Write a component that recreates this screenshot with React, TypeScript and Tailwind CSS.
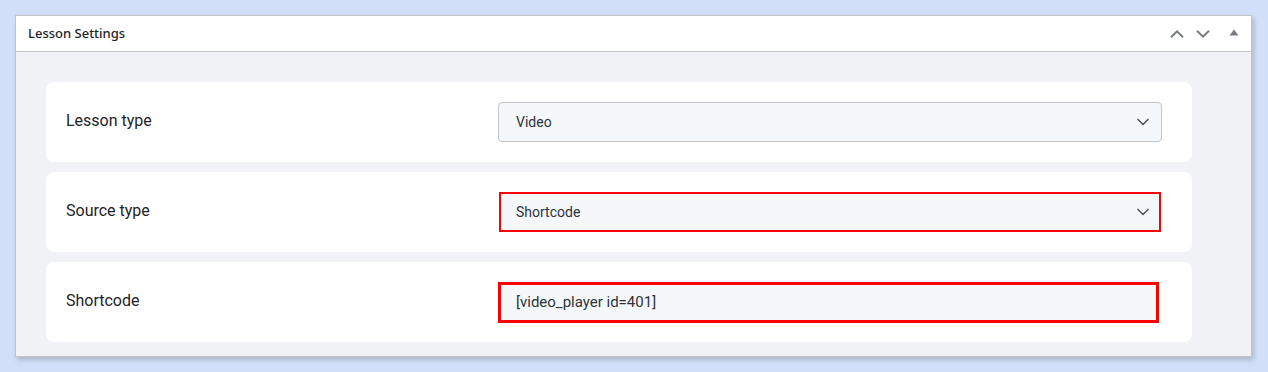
import { ChevronDown } from "lucide-react"

function Row({ label, children }: { label: string; children: React.ReactNode }) {
  return (
    <div className="flex h-20 items-center rounded-lg bg-white pl-5 pr-[30px]">
      <div className="w-[432px] pb-0.5 text-[16px] text-[#1d2327]">{label}</div>
      <div className="flex-1">{children}</div>
    </div>
  )
}

export default function App() {
  return (
    <div className="h-[372px] w-[1268px] bg-[#d1e0f8] pt-[15px] pl-[15px]" style={{ fontFamily: "Roboto, sans-serif" }}>
      <div className="w-[1237px] border border-[#c3c4c7] bg-white shadow-[2px_3px_5px_rgba(0,0,0,0.18)]">
        {/* header */}
        <div className="flex h-9 items-center justify-between border-b border-[#c3c4c7] pl-3 pr-[12px]">
          <h2 className="text-[13px] font-medium text-[#1d2327]" style={{ fontFamily: "'Noto Sans', 'Open Sans', sans-serif" }}>
            Lesson Settings
          </h2>
          <div className="flex items-center">
            <svg width="14" height="8" viewBox="0 0 14 8" fill="none">
              <path d="M1 7.2L7 1.4L13 7.2" stroke="#787c82" strokeWidth="2" />
            </svg>
            <svg width="14" height="8" viewBox="0 0 14 8" fill="none" className="ml-3">
              <path d="M1 0.8L7 6.6L13 0.8" stroke="#787c82" strokeWidth="2" />
            </svg>
            <svg width="10" height="7" viewBox="0 0 10 7" className="ml-[19px] mb-[3px]">
              <path d="M5 0.5L9.5 6.5H0.5Z" fill="#787c82" />
            </svg>
          </div>
        </div>

        {/* body */}
        <div className="flex flex-col gap-[10px] bg-[#f0f2f5] pt-[30px] pb-[14px] pl-[30px] pr-[59px]">
          <Row label="Lesson type">
            <div className="flex h-10 items-center justify-between rounded border border-[#c3c4c7] bg-[#f5f8fb] pl-[17px] pr-[8px] text-[14px] text-[#2c3338]">
              <span>Video</span>
              <ChevronDown size={20} strokeWidth={2} className="text-[#50575e]" />
            </div>
          </Row>
          <Row label="Source type">
            <div className="ml-px mr-px flex h-10 items-center justify-between border-2 border-[#ff0000] bg-[#f5f8fb] pl-[15px] pr-[6px] text-[14px] text-[#2c3338]">
              <span>Shortcode</span>
              <ChevronDown size={20} strokeWidth={2} className="text-[#50575e]" />
            </div>
          </Row>
          <Row label="Shortcode">
            <div className="mr-[3px] flex h-[41px] items-center border-[3px] border-[#ff0000] bg-[#f5f8fb] pl-[15px] text-[15px] text-[#2c3338]">
              [video_player id=401]
            </div>
          </Row>
        </div>
      </div>
    </div>
  )
}
